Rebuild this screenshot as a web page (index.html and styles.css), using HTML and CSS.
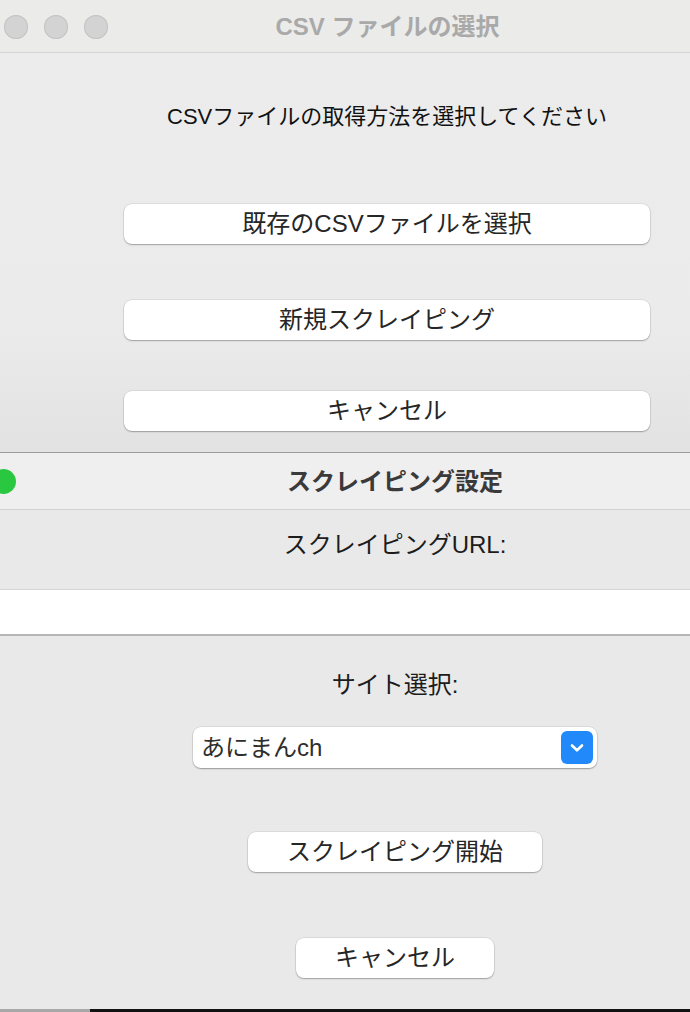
FILE: index.html
```html
<!DOCTYPE html>
<html lang="ja">
<head>
<meta charset="utf-8">
<title>CSVファイルの選択</title>
<link rel="stylesheet" href="styles.css">
</head>
<body>
<div class="win1">
  <div class="tb1">
    <div class="lights">
      <span class="light"></span><span class="light"></span><span class="light"></span>
    </div>
    <div class="t1">CSV ファイルの選択</div>
  </div>
  <div class="c1">
    <p class="lbl1">CSVファイルの取得方法を選択してください</p>
    <button class="btn w1 m1">既存のCSVファイルを選択</button>
    <button class="btn w1 m2">新規スクレイピング</button>
    <button class="btn w1 m3">キャンセル</button>
  </div>
</div>
<div class="win2">
  <div class="tb2">
    <div class="lights2"><span class="green"></span></div>
    <div class="t2">スクレイピング設定</div>
  </div>
  <div class="c2">
    <p class="lbl2 l-url">スクレイピングURL:</p>
  </div>
  <div class="url"></div>
  <div class="c2">
    <p class="lbl2 l-site">サイト選択:</p>
    <div class="select">
      <span class="sel-text">あにまんch</span>
      <span class="sel-btn">
        <svg width="16" height="12" viewBox="0 0 16 12"><path d="M3 3.5 L8 8.3 L13 3.5" fill="none" stroke="#fff" stroke-width="2.6" stroke-linecap="round" stroke-linejoin="round"/></svg>
      </span>
    </div>
    <button class="btn w-start">スクレイピング開始</button>
    <button class="btn w-cancel">キャンセル</button>
  </div>
</div>
<div class="bottom"><span class="b-gray"></span><span class="b-black"></span></div>
</body>
</html>
```

FILE: styles.css
```css
html, body {
  margin: 0;
  padding: 0;
}
body {
  width: 690px;
  height: 1012px;
  overflow: hidden;
  background: #e9e9e9;
  font-family: "Liberation Sans", "Noto Sans CJK JP", sans-serif;
  color: #1e1e1e;
}
p { margin: 0; }

.win1 {
  height: 453px;
  box-sizing: border-box;
  border-bottom: 1px solid #9c9c9c;
  background: linear-gradient(to bottom, #ececec 0, #ebebeb 330px, #e2e2e2 452px);
  display: flex;
  flex-direction: column;
}
.tb1 {
  height: 52px;
  border-bottom: 1px solid #d4d4d4;
  background: #ebebea;
  display: flex;
  align-items: center;
  flex-shrink: 0;
}
.lights {
  width: 85px;
  flex-shrink: 0;
  display: flex;
  gap: 16px;
  padding-left: 4px;
  box-sizing: border-box;
  margin-top: 2px;
}
.light {
  width: 24px;
  height: 24px;
  flex-shrink: 0;
  border-radius: 50%;
  background: #d3d3d3;
  box-shadow: inset 0 0 0 1px #c4c4c4;
}
.t1 {
  flex: 1;
  text-align: center;
  font-size: 24px;
  font-weight: bold;
  color: #a9a9a9;
  line-height: 30px;
  margin-top: 2px;
}
.c1 {
  display: flex;
  flex-direction: column;
  padding: 50px 40px 0 124px;
}
.lbl1 {
  font-size: 22px;
  line-height: 28px;
  text-align: center;
  color: #111;
}
.btn {
  font-family: inherit;
  font-size: 24px;
  line-height: 30px;
  color: #262626;
  background: #fff;
  border: none;
  border-radius: 8px;
  height: 40px;
  padding: 0;
  box-shadow: 0 1px 1.5px rgba(0,0,0,0.28), 0 0 0 0.5px rgba(0,0,0,0.12);
}
.w1 { width: 526px; }
.m1 { margin-top: 73px; }
.m2 { margin-top: 56px; }
.m3 { margin-top: 51px; }

.win2 {
  height: 556px;
  display: flex;
  flex-direction: column;
}
.tb2 {
  height: 56px;
  flex-shrink: 0;
  border-bottom: 1px solid #d2d2d2;
  background: #efefef;
  display: flex;
  align-items: center;
}
.lights2 {
  width: 100px;
  flex-shrink: 0;
  display: flex;
}
.green {
  width: 25px;
  height: 25px;
  border-radius: 50%;
  background: #29c840;
  margin-left: -9px;
  margin-top: 1px;
}
.t2 {
  flex: 1;
  text-align: center;
  font-size: 24px;
  font-weight: bold;
  color: #3a3a3a;
  line-height: 30px;
  margin-top: 1px;
}
.c2 {
  display: flex;
  flex-direction: column;
  align-items: center;
  padding-left: 100px;
}
.lbl2 {
  font-size: 24px;
  line-height: 30px;
  color: #1c1c1c;
}
.l-url { margin-top: 20px; margin-bottom: 29px; }
.url {
  height: 47px;
  box-sizing: border-box;
  background: #fff;
  border-top: 1px solid #d6d6d6;
  border-bottom: 2px solid #b6b6b6;
}
.l-site { margin-top: 34px; }
.select {
  margin-top: 27px;
  width: 404px;
  height: 41px;
  box-sizing: border-box;
  background: #fff;
  border-radius: 8px;
  box-shadow: 0 1px 1.5px rgba(0,0,0,0.3), 0 0 0 0.5px rgba(0,0,0,0.12);
  display: flex;
  align-items: center;
  justify-content: space-between;
  padding: 0 4px 0 8px;
}
.sel-text {
  font-size: 24px;
  line-height: 30px;
  color: #2e2e2e;
}
.sel-btn {
  width: 32px;
  height: 33px;
  border-radius: 6px;
  background: #2289fb;
  display: flex;
  align-items: center;
  justify-content: center;
}
.w-start { width: 294px; margin-top: 64px; }
.w-cancel { width: 198px; margin-top: 66px; }

.bottom {
  height: 3px;
  display: flex;
}
.b-gray { width: 90px; background: #a8a8a8; }
.b-black { flex: 1; background: #111; }
```
